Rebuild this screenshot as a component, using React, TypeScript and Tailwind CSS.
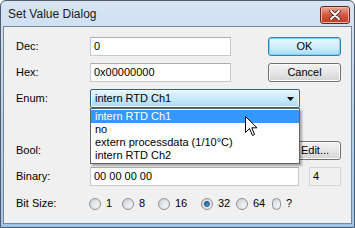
import React from 'react';

const font = { fontFamily: '"Liberation Sans", Arial, sans-serif' };

function Field({ className = '', children }: { className?: string; children?: React.ReactNode }) {
  return (
    <div
      className={`flex h-[19px] items-center border border-[#c5c9cf] border-t-[#abadb3] bg-white pl-[3px] ${className}`}
    >
      {children}
    </div>
  );
}

function Button({ className = '', children }: { className?: string; children: React.ReactNode }) {
  return (
    <div
      className={`flex h-[19px] items-center justify-center rounded-[3px] border border-[#707070] bg-gradient-to-b from-[#f3f3f3] via-[#e6e6e6] to-[#d3d3d3] shadow-[inset_0_0_0_1px_#fcfcfc] ${className}`}
    >
      {children}
    </div>
  );
}

function Radio({ label, checked, width }: { label: string; checked?: boolean; width: string }) {
  return (
    <div className={`flex items-center gap-[5px] ${width}`}>
      <div className="flex h-[12px] w-[12px] items-center justify-center rounded-full border border-[#8c8f94] bg-gradient-to-br from-[#cfd2d6] to-[#f4f5f6]">
        {checked ? (
          <div className="h-[6px] w-[6px] rounded-full border border-[#1b4d7c] bg-gradient-to-br from-[#0d4f88] to-[#59c0f0]" />
        ) : (
          <div className="h-[6px] w-[6px] rounded-full bg-gradient-to-br from-[#d8dade] to-[#f7f7f7]" />
        )}
      </div>
      <span>{label}</span>
    </div>
  );
}

export default function App() {
  const items = ['intern RTD Ch1', 'no', 'extern processdata (1/10°C)', 'intern RTD Ch2'];

  return (
    <div className="h-[228px] w-[355px] bg-white text-[11px] text-black" style={font}>
      <div className="relative flex h-full w-full flex-col rounded-t-[6px] border border-[#4f5b6b] bg-gradient-to-b from-[#d7e5f4] via-[#b9d1ea] to-[#9fc4e8]">
        {/* title bar */}
        <div className="flex h-[25px] shrink-0 items-center justify-between pl-[7px] pr-[4px]">
          <span className="text-[12px] text-[#1a1a1a]">Set Value Dialog</span>
          <div className="mt-[3px] flex h-[18px] w-[30px] items-center justify-center rounded-[3px] border border-[#6b2318] bg-gradient-to-b from-[#e9a797] via-[#d0583f] to-[#c0391f] shadow-[inset_0_0_0_1px_#f0b9a8]">
            <svg width="12" height="10" viewBox="0 0 12 10">
              <path d="M2 1 L10 9 M10 1 L2 9" stroke="#5a1a10" strokeWidth="3.6" strokeLinecap="round" />
              <path d="M2 1 L10 9 M10 1 L2 9" stroke="#ffffff" strokeWidth="2" strokeLinecap="round" />
            </svg>
          </div>
        </div>

        {/* client area */}
        <div className="mx-[2px] mb-[3px] flex flex-1 flex-col border border-[#76879c] bg-[#f0f0f0] pl-[12px] pt-[10px]">
          <div className="flex h-[19px] items-center">
            <span className="w-[74px]">Dec:</span>
            <Field className="w-[141px]">0</Field>
            <div className="ml-[37px] flex h-[19px] w-[73px] items-center justify-center rounded-[3px] border border-[#3c7fb1] bg-gradient-to-b from-[#eaf6fd] via-[#d3eefb] to-[#a9daf6] shadow-[inset_0_0_0_1px_#6fd6f8]">
              OK
            </div>
          </div>

          <div className="mt-[7px] flex h-[19px] items-center">
            <span className="w-[74px]">Hex:</span>
            <Field className="w-[141px]">0x00000000</Field>
            <Button className="ml-[37px] w-[73px]">Cancel</Button>
          </div>

          <div className="mt-[7px] flex h-[19px] items-center">
            <span className="w-[74px]">Enum:</span>
            <div className="relative w-[210px]">
              <div className="flex h-[19px] items-center justify-between rounded-[2px] border border-[#2c628b] bg-gradient-to-b from-[#eaf6fd] via-[#c9e9fb] to-[#a7d9f5] pl-[4px] pr-[5px] shadow-[inset_0_0_0_1px_#f4fbff]">
                <span>intern RTD Ch1</span>
                <svg width="7" height="4" viewBox="0 0 7 4">
                  <path d="M0 0 H7 L3.5 4 Z" fill="#000" />
                </svg>
              </div>
              <div className="absolute left-0 top-[19px] z-10 w-[210px] border border-[#646464] bg-white py-[1px] shadow-[2px_2px_2px_rgba(0,0,0,0.3)]">
                {items.map((item, i) => (
                  <div
                    key={item}
                    className={`flex h-[13px] items-center pl-[4px] ${i === 0 ? 'bg-[#3399ff] text-white' : ''}`}
                  >
                    {item}
                  </div>
                ))}
              </div>
            </div>
          </div>

          <div className="mt-[33px] flex h-[19px] items-center">
            <span className="w-[74px]">Bool:</span>
            <div className="w-[199px]" />
            <Button className="w-[52px]">Edit...</Button>
          </div>

          <div className="mt-[7px] flex h-[19px] items-center">
            <span className="w-[74px]">Binary:</span>
            <Field className="w-[209px]">00 00 00 00</Field>
            <div className="ml-[10px] flex h-[19px] w-[32px] items-center border border-[#d5d5d5] bg-[#f0f0f0] pl-[3px]">
              4
            </div>
          </div>

          <div className="mt-[8px] flex h-[19px] items-center">
            <span className="w-[73px]">Bit Size:</span>
            <Radio label="1" width="w-[33px]" />
            <Radio label="8" width="w-[36px]" />
            <Radio label="16" width="w-[43px]" />
            <Radio label="32" checked width="w-[35px]" />
            <Radio label="64" width="w-[36px]" />
            <Radio label="?" width="w-[20px]" />
          </div>
        </div>

        {/* mouse pointer */}
        <svg className="absolute left-[244px] top-[115px] z-20" width="13" height="21" viewBox="0 0 13 21">
          <path d="M0.5 0.5 L0.5 16.5 L4.5 12.5 L7.5 19.5 L9.5 18.5 L6.8 11.8 L12 11.8 Z" fill="#fff" stroke="#000" strokeWidth="1" />
        </svg>
      </div>
    </div>
  );
}
